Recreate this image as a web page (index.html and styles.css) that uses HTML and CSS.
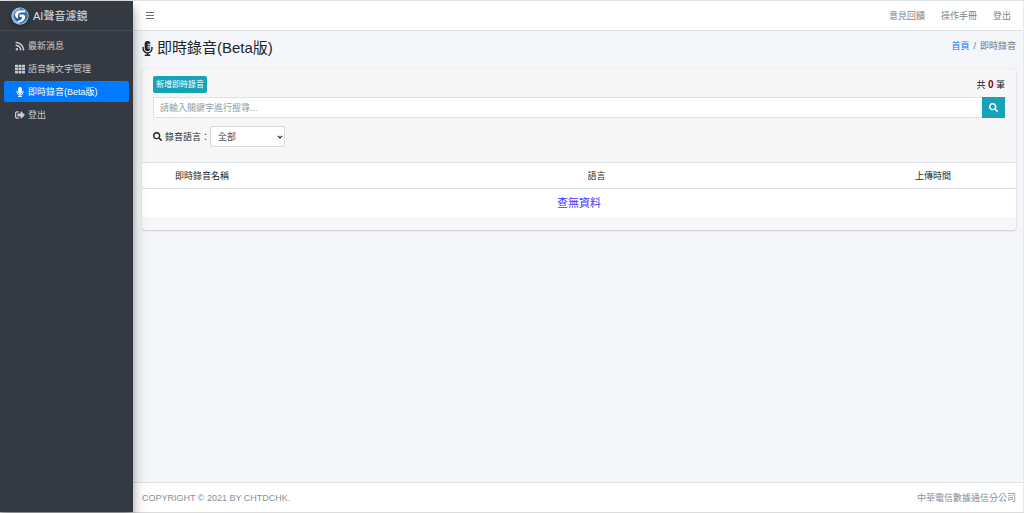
FILE: index.html
```html
<!DOCTYPE html>
<html lang="zh-Hant">
<head>
<meta charset="utf-8">
<meta name="viewport" content="width=device-width, initial-scale=1">
<title>AI聲音濾鏡</title>
<link rel="stylesheet" href="styles.css">
</head>
<body>
<div class="wrapper">
  <aside class="sidebar">
    <a href="#" class="brand">
      <svg class="brand-logo" viewBox="0 0 36 36" aria-hidden="true">
        <circle cx="18" cy="18" r="17.5" fill="#a9bccd"/>
        <path d="M18 2Q3 4 3 18Q4 31 18 34Z" fill="#8facc8"/>
        <path d="M18 2Q33 5 34 18Q33 31 18 34Z" fill="#3a7ab8"/>
        <circle cx="18" cy="18" r="12" fill="#245f9f"/>
        <path d="M28 7Q9 5 8 15Q8 21 14 23L14 17Q14 12 20 11L28 11Z" fill="#fff"/>
        <path d="M17 15H26Q29 17 28 22Q26 30 14 31L13 28Q22 27 22 20H17Z" fill="#fff"/>
      </svg>
      <span>AI聲音濾鏡</span>
    </a>
    <nav class="side-nav">
      <a href="#" class="side-link">
        <svg class="icon" viewBox="0 0 448 512" aria-hidden="true"><path d="M128 416a64 64 0 1 1-128 0 64 64 0 0 1 128 0zm176 47C296 307 173 184 17 176c-9-1-17 7-17 16v48c0 8 7 15 15 16 112 7 202 97 209 209 1 8 8 15 16 15h48c9 0 17-8 16-17zm144 1C440 227 250 40 16 32c-9 0-16 7-16 16v48c0 9 7 16 15 16 192 8 345 162 353 353 0 8 7 15 16 15h48c9 0 16-7 16-16z"/></svg>
        <span>最新消息</span>
      </a>
      <a href="#" class="side-link">
        <svg class="icon" viewBox="0 0 512 512" aria-hidden="true"><path d="M0 56q0-24 24-24h125v128H0zM181 32h150v128H181zM363 32h125q24 0 24 24v104H363zM0 192h149v128H0zM181 192h150v128H181zM363 192h149v128H363zM0 352h149v128H24q-24 0-24-24zM181 352h150v128H181zM363 352h149v104q0 24-24 24H363z"/></svg>
        <span>語音轉文字管理</span>
      </a>
      <a href="#" class="side-link active" aria-current="page">
        <svg class="icon" viewBox="0 0 352 512" aria-hidden="true"><path d="M176 352c53 0 96-43 96-96V96a96 96 0 0 0-192 0v160c0 53 43 96 96 96zm160-160h-16c-9 0-16 7-16 16v48c0 75-64 135-140 127-67-6-116-67-116-133v-42c0-9-7-16-16-16H16c-9 0-16 7-16 16v40c0 90 64 169 152 182v34H96c-9 0-16 7-16 16v16c0 9 7 16 16 16h160c9 0 16-7 16-16v-16c0-9-7-16-16-16h-56v-33c86-12 152-85 152-175v-48c0-9-7-16-16-16z"/></svg>
        <span>即時錄音(Beta版)</span>
      </a>
      <a href="#" class="side-link">
        <svg class="icon" viewBox="0 0 512 512" aria-hidden="true"><path d="M497 273L329 441c-15 15-41 5-41-17v-96H152c-13 0-24-11-24-24v-96c0-13 11-24 24-24h136V88c0-21 26-32 41-17l168 168c9 9 9 25 0 34zM192 436v-40c0-7-5-12-12-12H96c-18 0-32-14-32-32V160c0-18 14-32 32-32h84c7 0 12-5 12-12V76c0-7-5-12-12-12H96c-53 0-96 43-96 96v192c0 53 43 96 96 96h84c7 0 12-5 12-12z"/></svg>
        <span>登出</span>
      </a>
    </nav>
  </aside>

  <div class="page">
    <header class="topbar">
      <button type="button" class="menu-btn" aria-label="選單">
        <svg viewBox="0 0 8 8" aria-hidden="true"><path d="M0 0h8v1H0zM0 3h8v1H0zM0 6h8v1H0z"/></svg>
      </button>
      <nav class="top-links">
        <a href="#">意見回饋</a>
        <a href="#">操作手冊</a>
        <a href="#">登出</a>
      </nav>
    </header>

    <main class="content">
      <div class="heading">
        <h1>
          <svg class="title-icon" viewBox="0 0 352 512" aria-hidden="true"><path d="M336 192h-16c-9 0-16 7-16 16v48c0 75-64 135-140 127-67-6-116-67-116-133v-42c0-9-7-16-16-16H16c-9 0-16 7-16 16v40c0 90 64 169 152 182v34H96c-9 0-16 7-16 16v16c0 9 7 16 16 16h160c9 0 16-7 16-16v-16c0-9-7-16-16-16h-56v-33c86-12 152-85 152-175v-48c0-9-7-16-16-16zM176 352c53 0 96-43 96-96h-85c-6 0-11-4-11-8v-16c0-4 5-8 11-8h85v-32h-85c-6 0-11-4-11-8v-16c0-4 5-8 11-8h85v-32h-85c-6 0-11-4-11-8v-16c0-4 5-8 11-8h85a96 96 0 0 0-192 0v160c0 53 43 96 96 96z"/></svg>
          <span>即時錄音(Beta版)</span>
        </h1>
        <nav class="breadcrumb" aria-label="導覽路徑">
          <a href="#">首頁</a><span>/</span><span>即時錄音</span>
        </nav>
      </div>

      <section class="card">
        <form class="card-head">
          <div class="tools">
            <button type="button" class="add-btn">新增即時錄音</button>
            <p class="total">共 <b>0</b> 筆</p>
          </div>
          <div class="search">
            <input type="text" class="search-input" placeholder="請輸入關鍵字進行搜尋..." aria-label="關鍵字">
            <button type="button" class="search-btn" aria-label="搜尋">
              <svg class="icon" viewBox="0 0 512 512" aria-hidden="true"><path d="M505 443L405 343c-4-4-11-7-17-7h-16a208 208 0 1 0-36 36v16c0 7 3 13 7 17l100 100c9 9 24 9 34 0l28-28c9-10 9-25 0-34zM208 336a128 128 0 1 1 0-256 128 128 0 0 1 0 256z"/></svg>
            </button>
          </div>
          <div class="filter">
            <svg class="icon" viewBox="0 0 512 512" aria-hidden="true"><path d="M505 443L405 343c-4-4-11-7-17-7h-16a208 208 0 1 0-36 36v16c0 7 3 13 7 17l100 100c9 9 24 9 34 0l28-28c9-10 9-25 0-34zM208 336a128 128 0 1 1 0-256 128 128 0 0 1 0 256z"/></svg>
            <label for="lang">錄音語言：</label>
            <span class="select-wrap">
              <select id="lang"><option>全部</option></select>
              <svg class="chevron" viewBox="0 0 6 4" aria-hidden="true"><path d="M1 .8L3 2.8 5 .8"/></svg>
            </span>
          </div>
        </form>
        <table class="records">
          <thead>
            <tr><th class="col-name">即時錄音名稱</th><th class="col-lang">語言</th><th class="col-time">上傳時間</th></tr>
          </thead>
          <tbody>
            <tr><td colspan="3" class="empty">查無資料</td></tr>
          </tbody>
        </table>
        <div class="card-foot"></div>
      </section>
    </main>

    <footer class="footer">
      <span>COPYRIGHT © 2021 BY CHTDCHK.</span>
      <span>中華電信數據通信分公司</span>
    </footer>
  </div>
</div>
</body>
</html>
```
FILE: styles.css
```css
* { box-sizing: border-box; }

body {
  margin: 0;
  font-family: "Liberation Sans", "Noto Sans CJK TC", sans-serif;
  font-size: 9px;
  line-height: 14px;
  color: #212529;
  background: #f4f6f9;
}

a { color: inherit; text-decoration: none; }
button, input, select { font: inherit; margin: 0; }
svg { display: block; fill: currentColor; flex: none; }
.icon { width: 9px; height: 9px; }

.wrapper {
  display: flex;
  min-height: 100vh;
  border-top: 1px solid #dfe1e2;
  border-bottom: 1px solid #dcdcdc;
}

/* Sidebar */
.sidebar {
  position: relative;
  z-index: 1;
  flex: none;
  width: 133px;
  background: #353a42;
  color: #c7cbd0;
  box-shadow: 0 8px 15px rgba(0, 0, 0, .25), 0 6px 6px rgba(0, 0, 0, .22);
}
.brand {
  display: flex;
  align-items: center;
  gap: 4px;
  height: 30px;
  padding: 0 11px;
  border-bottom: 1px solid #454b52;
  font-size: 11px;
  color: #dcdee0;
}
.brand-logo {
  width: 18px;
  height: 18px;
  border-radius: 50%;
  box-shadow: 0 3px 6px rgba(0, 0, 0, .3);
}
.side-nav {
  display: flex;
  flex-direction: column;
  gap: 2px;
  padding: 4px;
}
.side-link {
  display: flex;
  align-items: center;
  gap: 3px;
  height: 21px;
  padding: 0 11px;
  border-radius: 2px;
}
.side-link .icon { width: 10px; height: 10px; }
.side-link.active { background: #007bff; color: #fff; }

/* Page column */
.page {
  flex: 1;
  min-width: 0;
  display: flex;
  flex-direction: column;
  border-right: 1px solid #e8eaee;
}
.topbar {
  display: flex;
  align-items: center;
  justify-content: space-between;
  height: 30px;
  padding: 0 12px 0 13px;
  background: #fff;
  border-bottom: 1px solid #dee2e6;
  color: #808488;
}
.menu-btn {
  padding: 0;
  border: 0;
  background: none;
  color: #6c6f72;
}
.menu-btn svg { width: 8px; height: 8px; }
.top-links { display: flex; gap: 16px; }

.content { flex: 1; padding: 8px 7px 8px 9px; }
.heading {
  display: flex;
  align-items: flex-start;
  justify-content: space-between;
  margin-bottom: 12px;
}
h1 {
  display: flex;
  align-items: center;
  gap: 4px;
  margin: 0;
  font-size: 15px;
  line-height: 18px;
  font-weight: 400;
}
.title-icon { width: 11px; height: 15px; }
.breadcrumb { display: flex; gap: 4px; color: #6c757d; }
.breadcrumb a { color: #007bff; }

/* Card */
.card {
  background: #f7f7f7;
  border-radius: 2px;
  box-shadow: 0 0 1px rgba(0, 0, 0, .2), 0 1px 2px rgba(0, 0, 0, .15);
}
.card-head { padding: 7px 11px 15px; }
.tools {
  display: flex;
  align-items: center;
  justify-content: space-between;
  margin-bottom: 4px;
}
.add-btn {
  height: 17px;
  padding: 0 3px;
  border: 0;
  border-radius: 2px;
  background: #17a2b8;
  color: #fff;
  font-size: 8px;
}
.total { margin: 0; }
.total b { font-size: 10px; color: #8b0000; }
.search { display: flex; margin-bottom: 8px; }
.search-input {
  flex: 1;
  min-width: 0;
  height: 21px;
  padding: 0 6px;
  border: 1px solid #dee1e4;
  border-right: 0;
  border-radius: 2px 0 0 2px;
  background: #fff;
}
.search-input::placeholder { color: #939ba2; opacity: 1; }
.search-btn {
  display: flex;
  align-items: center;
  justify-content: center;
  width: 23px;
  height: 21px;
  padding: 0;
  border: 0;
  background: #17a2b8;
  color: #fff;
}
.filter { display: flex; align-items: center; }
.filter label { margin-left: 3px; }
.select-wrap { position: relative; }
.select-wrap select {
  display: block;
  width: 75px;
  height: 21px;
  padding: 0 7px;
  appearance: none;
  border: 1px solid #d6dbe0;
  border-radius: 2px;
  background: #fff;
  color: #495057;
}
.chevron {
  position: absolute;
  top: 9px;
  right: 2px;
  width: 6px;
  height: 4px;
  fill: none;
  stroke: #222;
  stroke-width: 1.2;
  pointer-events: none;
}

.records {
  width: 100%;
  table-layout: fixed;
  border-collapse: collapse;
  background: #fff;
}
.records th {
  height: 26px;
  padding: 0;
  border-top: 1px solid #dee2e6;
  border-bottom: 1px solid #dee2e6;
  font-weight: 400;
}
.records .col-name { width: 23%; padding-left: 33px; text-align: left; }
.records .col-time { width: 19%; }
.records .empty {
  height: 28px;
  padding: 0;
  text-align: center;
  font-size: 11px;
  color: #3a3aff;
}
.card-foot { height: 13px; }

.footer {
  display: flex;
  align-items: center;
  justify-content: space-between;
  height: 30px;
  padding: 0 7px 0 9px;
  background: #fff;
  border-top: 1px solid #dee2e6;
  color: #869099;
}
```
